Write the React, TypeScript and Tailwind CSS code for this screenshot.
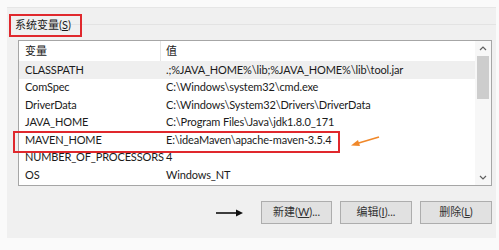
import React from "react";

const rows: [string, string][] = [
  ["CLASSPATH", ".;%JAVA_HOME%\\lib;%JAVA_HOME%\\lib\\tool.jar"],
  ["ComSpec", "C:\\Windows\\system32\\cmd.exe"],
  ["DriverData", "C:\\Windows\\System32\\Drivers\\DriverData"],
  ["JAVA_HOME", "C:\\Program Files\\Java\\jdk1.8.0_171"],
  ["MAVEN_HOME", "E:\\ideaMaven\\apache-maven-3.5.4"],
  ["NUMBER_OF_PROCESSORS", "4"],
  ["OS", "Windows_NT"],
];

const font = { fontFamily: 'Lato, "Noto Sans CJK SC", sans-serif' };

export default function App() {
  return (
    <div
      className="relative w-[499px] h-[250px] bg-[#fafafa] pt-[7px] pl-[7px] pr-[3px] text-[11px] text-[#1b1b1b] overflow-hidden"
      style={font}
    >
      <div className="relative h-[231px] bg-[#f0f0f0] border-t border-[#e6e6e6] flex flex-col">
        {/* group label */}
        <div className="h-[32px] flex items-start">
          <div className="pl-[8px] pt-[8px] leading-[18px] whitespace-nowrap">
            系统变量(<span className="underline">S</span>)
          </div>
          <div className="flex-1 mt-[16px] border-t border-[#e3e3e3]" />
        </div>
        {/* list box */}
        <div className="ml-[11px] w-[474px] h-[146px] border border-[#a6a6a6] bg-white flex">
          <div className="flex-1 flex flex-col">
            <div className="h-[20px] flex items-center">
              <div className="w-[141px] pl-[6px]">变量</div>
              <div className="h-full border-l border-[#e5e5e5]" />
              <div className="pl-[5px]">值</div>
            </div>
            {rows.map(([k, v], i) => (
              <div
                key={k}
                className={
                  "h-[17.5px] flex items-center whitespace-nowrap tracking-[-0.15px] " +
                  (i === 0 ? "bg-[#efefef]" : "")
                }
              >
                <div className="w-[142px] pl-[6px]">{k}</div>
                <div className="pl-[5px]">{v}</div>
              </div>
            ))}
          </div>
          <div className="w-[16px] flex flex-col items-center bg-[#f7f7f7]">
            <div className="h-[15px] w-full flex items-center justify-center">
              <svg width="8" height="5" viewBox="0 0 8 5">
                <path d="M1 4 L4 1 L7 4" stroke="#606060" strokeWidth="1.2" fill="none" />
              </svg>
            </div>
            <div className="w-[12px] h-[43px] bg-[#cdcdcd]" />
            <div className="flex-1" />
            <div className="h-[15px] w-full flex items-center justify-center">
              <svg width="8" height="5" viewBox="0 0 8 5">
                <path d="M1 1 L4 4 L7 1" stroke="#606060" strokeWidth="1.2" fill="none" />
              </svg>
            </div>
          </div>
        </div>
        {/* buttons */}
        <div className="mt-[15px] flex items-center justify-end gap-[8px] pr-[4px]">
          <svg width="28" height="8" viewBox="0 0 28 8" className="mr-[9px]">
            <path d="M0 4 L22 4" stroke="#111" strokeWidth="1.6" />
            <path d="M20 0.5 L27 4 L20 7.5 Z" fill="#111" />
          </svg>
          <div className="w-[71px] h-[23px] bg-[#e1e1e1] border border-[#adadad] flex items-center justify-center text-[#333]">
            新建(<span className="underline">W</span>)...
          </div>
          <div className="w-[72px] h-[23px] bg-[#e1e1e1] border border-[#adadad] flex items-center justify-center text-[#333]">
            编辑(<span className="underline">I</span>)...
          </div>
          <div className="w-[72px] h-[23px] bg-[#e1e1e1] border border-[#adadad] flex items-center justify-center text-[#333]">
            删除(<span className="underline">L</span>)
          </div>
        </div>
      </div>
      {/* annotations */}
      <div className="absolute left-[9px] top-[14px] w-[73px] h-[23px] border-2 border-[#e0282d]" />
      <div className="absolute left-[13px] top-[131px] w-[327px] h-[22px] border-2 border-[#e0282d]" />
      <svg className="absolute left-[349px] top-[135px]" width="32" height="13" viewBox="0 0 32 13">
        <path d="M30 2 L8 8.5" stroke="#f0882a" strokeWidth="1.8" />
        <path d="M2 10.5 L9 5 L11 11 Z" fill="#f0882a" />
      </svg>
    </div>
  );
}
